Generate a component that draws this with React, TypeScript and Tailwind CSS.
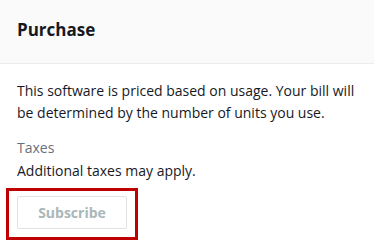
export default function App() {
  return (
    <div className="w-[374px] h-[243px] bg-white text-[#16191f] overflow-hidden" style={{ fontFamily: '"Open Sans", sans-serif' }}>
      <div className="h-[64px] bg-[#fafafa] border-b border-[#eaeded] pl-[17px] pt-[17px]">
        <h2 className="text-[17px] font-bold leading-[26px]">Purchase</h2>
      </div>
      <div className="pl-[17px] pt-[16px] text-[14px] leading-[22px]">
        <p className="w-[340px]">This software is priced based on usage. Your bill will be determined by the number of units you use.</p>
        <div className="mt-[13px] text-[#687078]">Taxes</div>
        <div className="mt-[1px]">Additional taxes may apply.</div>
        <div className="relative mt-[14px] w-[110px]">
          <button disabled className="w-[110px] h-[33px] border border-[#dfe3e3] rounded-[2px] bg-white text-[#aab7b8] font-bold text-[14px] flex items-center justify-center">
            Subscribe
          </button>
          <div className="absolute left-[-11px] top-[-8px] w-[132px] h-[52px] border-[3px] border-[#c00000] pointer-events-none" />
        </div>
      </div>
    </div>
  );
}
